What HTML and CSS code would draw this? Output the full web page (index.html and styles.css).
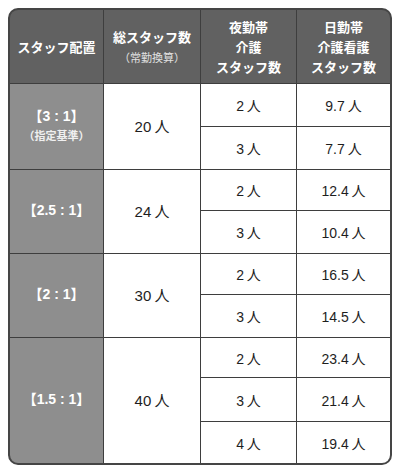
FILE: index.html
```html
<!DOCTYPE html>
<html lang="ja">
<head>
<meta charset="utf-8">
<link rel="stylesheet" href="styles.css">
</head>
<body>
<div class="page">
  <div class="table">
    <div class="hd c1"><span>スタッフ配置</span></div>
    <div class="hd"><span>総スタッフ数</span><span class="sub">（常勤換算）</span></div>
    <div class="hd"><span>夜勤帯</span><span>介護</span><span>スタッフ数</span></div>
    <div class="hd"><span>日勤帯</span><span>介護看護</span><span>スタッフ数</span></div>

    <div class="lab g1"><span>【3 : 1】</span><span class="sub2">（指定基準）</span></div>
    <div class="tot g1">20 人</div>
    <div class="val">2 人</div><div class="val">9.7 人</div>
    <div class="val">3 人</div><div class="val">7.7 人</div>

    <div class="lab g2"><span>【2.5 : 1】</span></div>
    <div class="tot g2">24 人</div>
    <div class="val">2 人</div><div class="val">12.4 人</div>
    <div class="val">3 人</div><div class="val">10.4 人</div>

    <div class="lab g3"><span>【2 : 1】</span></div>
    <div class="tot g3">30 人</div>
    <div class="val">2 人</div><div class="val">16.5 人</div>
    <div class="val">3 人</div><div class="val">14.5 人</div>

    <div class="lab g4"><span>【1.5 : 1】</span></div>
    <div class="tot g4">40 人</div>
    <div class="val">2 人</div><div class="val">23.4 人</div>
    <div class="val">3 人</div><div class="val">21.4 人</div>
    <div class="val">4 人</div><div class="val">19.4 人</div>
  </div>
</div>
</body>
</html>
```
FILE: styles.css
```css
html, body {
  margin: 0;
  padding: 0;
  background: #ffffff;
}
.page {
  padding: 8px;
  font-family: "Liberation Sans", "Noto Sans CJK JP", sans-serif;
}
.table {
  width: 384px;
  box-sizing: border-box;
  display: grid;
  grid-template-columns: 93px 96px 95px 93px;
  grid-template-rows: 73px 42px 42px 40px 42px 40px 42px 39px 43px 41px;
  gap: 1px;
  background: #3e3e3e;
  border: 2px solid #454545;
  border-radius: 10px;
  overflow: hidden;
}
.hd {
  background: #616161;
  color: #ffffff;
  font-family: "Noto Sans CJK JP", sans-serif;
  font-weight: 700;
  font-size: 13px;
  line-height: 20px;
  display: flex;
  flex-direction: column;
  align-items: center;
  justify-content: center;
  text-align: center;
}
.hd .sub {
  font-size: 11px;
  font-weight: 400;
  color: #e2e2e2;
}
.lab {
  background: #8e8e8e;
  color: #ffffff;
  font-weight: 700;
  font-size: 14px;
  line-height: 19px;
  display: flex;
  flex-direction: column;
  align-items: center;
  justify-content: center;
  padding-bottom: 2px;
}
.lab .sub2 {
  font-family: "Noto Sans CJK JP", sans-serif;
  font-size: 11px;
  color: #f0f0f0;
}
.tot, .val {
  background: #ffffff;
  color: #1e1e1e;
  display: flex;
  align-items: center;
  justify-content: center;
  word-spacing: -1px;
}
.tot {
  font-size: 15px;
  padding-bottom: 2px;
}
.val {
  font-size: 14px;
}
.g1, .g2, .g3 { grid-row: span 2; }
.g4 { grid-row: span 3; }
```
